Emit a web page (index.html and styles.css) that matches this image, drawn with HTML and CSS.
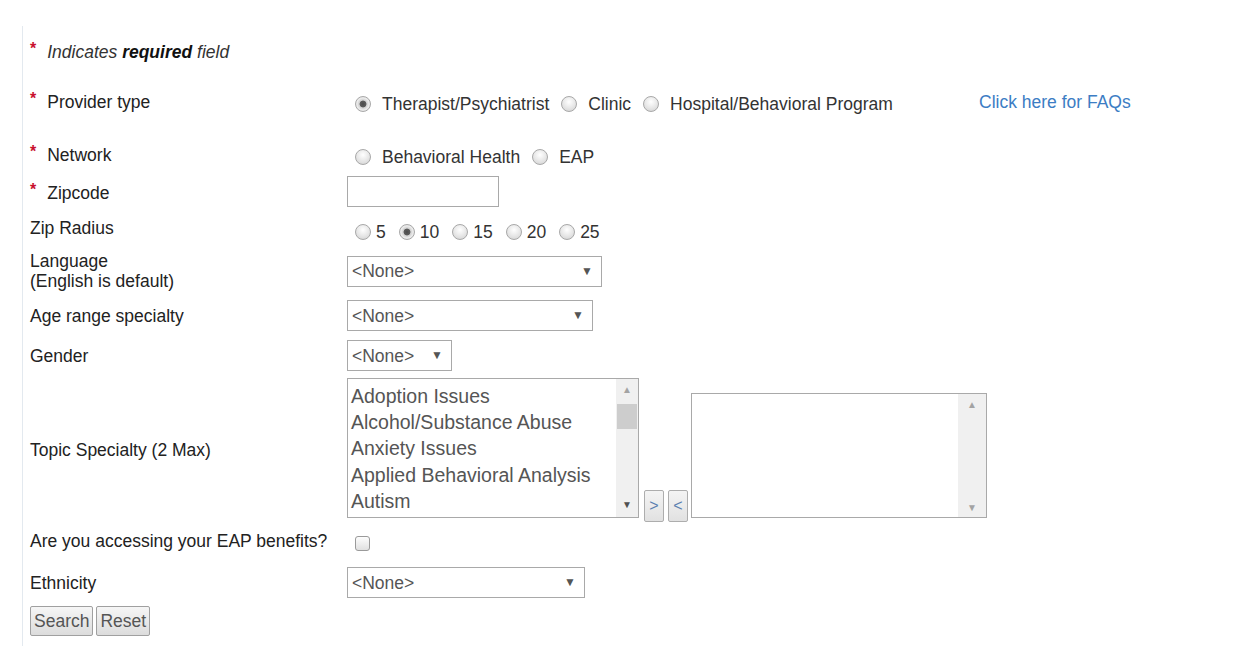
FILE: index.html
```html
<!DOCTYPE html>
<html lang="en">
<head>
    <meta charset="UTF-8">
    <title>Find a Provider</title>
    <link rel="stylesheet" href="styles.css">
</head>
<body>

    <div class="page">
        <form class="finder" onsubmit="return false;">
            <p class="note"><span class="req">*</span><em>Indicates <b>required</b> field</em></p>

            <!-- Provider type -->
            <div class="row row-provider">
                <label class="lbl"><span class="req">*</span>Provider type</label>
                <div class="opts">
                    <label class="opt"><input type="radio" name="ptype" checked>Therapist/Psychiatrist</label>
                    <label class="opt"><input type="radio" name="ptype">Clinic</label>
                    <label class="opt"><input type="radio" name="ptype">Hospital/Behavioral Program</label>
                </div>
                <a href="#" class="faq">Click here for FAQs</a>
            </div>

            <div class="row row-network">
                <label class="lbl"><span class="req">*</span>Network</label>
                <div class="opts">
                    <label class="opt"><input type="radio" name="network">Behavioral Health</label>
                    <label class="opt"><input type="radio" name="network">EAP</label>
                </div>
            </div>

            <div class="row row-zip">
                <label class="lbl"><span class="req">*</span>Zipcode</label>
                <div><input type="text" class="zip"></div>
            </div>

            <div class="row row-radius">
                <label class="lbl">Zip Radius</label>
                <div class="opts opts-small">
                    <label class="opt"><input type="radio" name="radius">5</label>
                    <label class="opt"><input type="radio" name="radius" checked>10</label>
                    <label class="opt"><input type="radio" name="radius">15</label>
                    <label class="opt"><input type="radio" name="radius">20</label>
                    <label class="opt"><input type="radio" name="radius">25</label>
                </div>
            </div>

            <div class="row row-lang">
                <label class="lbl">Language<br>(English is default)</label>
                <div><span class="pick pick-lang"><select><option>&lt;None&gt;</option></select></span></div>
            </div>

            <div class="row row-std">
                <label class="lbl">Age range specialty</label>
                <div><span class="pick pick-age"><select><option>&lt;None&gt;</option></select></span></div>
            </div>

            <div class="row row-std">
                <label class="lbl">Gender</label>
                <div><span class="pick pick-gender"><select><option>&lt;None&gt;</option></select></span></div>
            </div>

            <!-- Topic specialty: two list boxes with move buttons -->
            <div class="row row-topic">
                <label class="lbl">Topic Specialty (2 Max)</label>
                <div class="picker">
                    <div class="listbox listbox-left">
                        <div class="items">
                            <div>Adoption Issues</div>
                            <div>Alcohol/Substance Abuse</div>
                            <div>Anxiety Issues</div>
                            <div>Applied Behavioral Analysis</div>
                            <div>Autism</div>
                        </div>
                        <div class="scroll">
                            <span class="arrow">&#9650;</span>
                            <span class="track"><span class="thumb"></span></span>
                            <span class="arrow">&#9660;</span>
                        </div>
                    </div>
                    <button type="button" class="move">&gt;</button>
                    <button type="button" class="move">&lt;</button>
                    <div class="listbox listbox-right">
                        <div class="items"></div>
                        <div class="scroll">
                            <span class="arrow">&#9650;</span>
                            <span class="track"></span>
                            <span class="arrow">&#9660;</span>
                        </div>
                    </div>
                </div>
            </div>

            <div class="row row-eap">
                <label class="lbl">Are you accessing your EAP benefits?</label>
                <div><input type="checkbox" class="check"></div>
            </div>

            <div class="row row-eth">
                <label class="lbl">Ethnicity</label>
                <div><span class="pick pick-eth"><select><option>&lt;None&gt;</option></select></span></div>
            </div>

            <div class="actions">
                <button type="submit" class="btn">Search</button>
                <button type="reset" class="btn">Reset</button>
            </div>
        </form>
    </div>

</body>
</html>
```

FILE: styles.css
```css
body {
    margin: 0;
    font-family: "Liberation Sans", Arial, sans-serif;
    font-size: 17.5px;
    color: #222;
    background: #fff;
}
.page {
    margin: 26px 0 0 22px;
    border-left: 1px solid #e3e9ef;
    min-height: 620px;
    padding: 10px 0 0 7px;
}
.note {
    margin: 0;
    height: 26px;
    line-height: 26px;
    color: #333;
}
.note b {
    color: #111;
}
.req {
    color: #c8102e;
    font-weight: bold;
    font-size: 16px;
    vertical-align: 4px;
    margin-right: 11px;
}
.row {
    display: grid;
    grid-template-columns: 317px 632px auto;
    align-items: center;
}
.lbl {
    line-height: 20px;
    color: #222;
}
.row-provider { margin-top: 24px; height: 28px; }
.row-network { margin-top: 25px; height: 28px; }
.row-zip { margin-top: 9px; height: 31px; }
.row-radius { margin-top: 7px; height: 28px; }
.row-lang { margin-top: 9px; height: 40px; }
.row-std { margin-top: 9px; height: 31px; }
.row-topic { margin-top: 7px; height: 144px; }
.row-eap { margin-top: 6px; height: 26px; }
.row-eth { margin-top: 13px; height: 31px; }

/* radio groups */
.opts {
    display: flex;
    align-items: center;
    padding: 8px 0 0 8px;
    color: #333;
}
.opt {
    display: flex;
    align-items: center;
    line-height: 20px;
}
.opt + .opt {
    margin-left: 12px;
}
.opt input[type="radio"] {
    -webkit-appearance: none;
    appearance: none;
    width: 16px;
    height: 16px;
    margin: 0 11px 0 0;
    border: 1px solid #a8a8a8;
    border-radius: 50%;
    background: radial-gradient(circle at 50% 35%, #ffffff 0, #e6e6e6 55%, #cfcfcf 100%);
    box-sizing: border-box;
}
.opt input[type="radio"]:checked {
    background: radial-gradient(circle, #4a4a4a 0, #5c5c5c 3px, #cfcfcf 3.8px, #ececec 6px, #d6d6d6 100%);
}
.opts-small .opt input[type="radio"] {
    margin-right: 5px;
}
.opts-small .opt + .opt {
    margin-left: 13px;
}
.faq {
    color: #3c7dc4;
    text-decoration: none;
    padding-top: 4px;
}

.zip {
    width: 152px;
    height: 31px;
    box-sizing: border-box;
    border: 1px solid #a9a9a9;
    margin: 0;
    padding: 2px 4px;
    font: inherit;
}

/* dropdowns */
.pick {
    display: inline-block;
    position: relative;
    vertical-align: top;
}
.pick select {
    -webkit-appearance: none;
    appearance: none;
    height: 31px;
    box-sizing: border-box;
    border: 1px solid #a9a9a9;
    border-radius: 0;
    background: #fff;
    color: #555;
    font: inherit;
    padding: 0 0 0 4px;
    margin: 0;
    display: block;
}
.pick::after {
    content: "\25BC";
    position: absolute;
    right: 9px;
    top: 8px;
    font-size: 12px;
    color: #555;
    pointer-events: none;
}
.pick-lang select { width: 255px; }
.pick-age select { width: 246px; }
.pick-gender select { width: 105px; }
.pick-eth select { width: 238px; }

/* topic list boxes */
.picker {
    display: flex;
    align-items: flex-end;
    height: 144px;
}
.picker > * {
    flex-shrink: 0;
}
.listbox {
    display: flex;
    border: 1px solid #a9a9a9;
    box-sizing: border-box;
    background: #fff;
    margin-bottom: 4px;
}
.listbox-left {
    width: 292px;
    height: 140px;
}
.listbox-right {
    width: 296px;
    height: 125px;
    margin-left: 3px;
}
.items {
    flex: 1;
    padding: 4px 0 0 3px;
    color: #555;
    font-size: 19.5px;
    line-height: 26.2px;
    white-space: nowrap;
    overflow: hidden;
}
.scroll {
    width: 20px;
    background: #f0f0f0;
    display: flex;
    flex-direction: column;
    align-items: center;
    padding: 0 1px;
}
.listbox-right .scroll {
    width: 26px;
}
.arrow {
    font-size: 10px;
    color: #a3a3a3;
    height: 20px;
    line-height: 22px;
}
.listbox-left .arrow:last-child {
    color: #505050;
    line-height: 16px;
}
.track {
    flex: 1;
    width: 100%;
}
.thumb {
    display: block;
    height: 25px;
    margin-top: 5px;
    background: #cdcdcd;
}
.move {
    width: 20px;
    height: 32px;
    margin: 0 0 0 4px;
    padding: 0;
    border: 1px solid #adadad;
    border-radius: 2px;
    background: linear-gradient(#f4f4f4, #e1e1e1);
    color: #5a7fb0;
    font: inherit;
    font-size: 16px;
}
.move:first-of-type {
    margin-left: 5px;
}

.check {
    -webkit-appearance: none;
    appearance: none;
    width: 15px;
    height: 15px;
    margin: 4px 0 0 8px;
    border: 1px solid #9a9a9a;
    border-radius: 3px;
    background: linear-gradient(#fdfdfd, #e0e0e0);
    display: block;
}

.actions {
    margin-top: 8px;
    display: flex;
    gap: 3px;
}
.btn {
    height: 30px;
    padding: 0 3px;
    border: 1px solid #a0a0a0;
    border-radius: 2px;
    background: linear-gradient(#f6f6f6, #dcdcdc);
    color: #555;
    font: inherit;
}
```
